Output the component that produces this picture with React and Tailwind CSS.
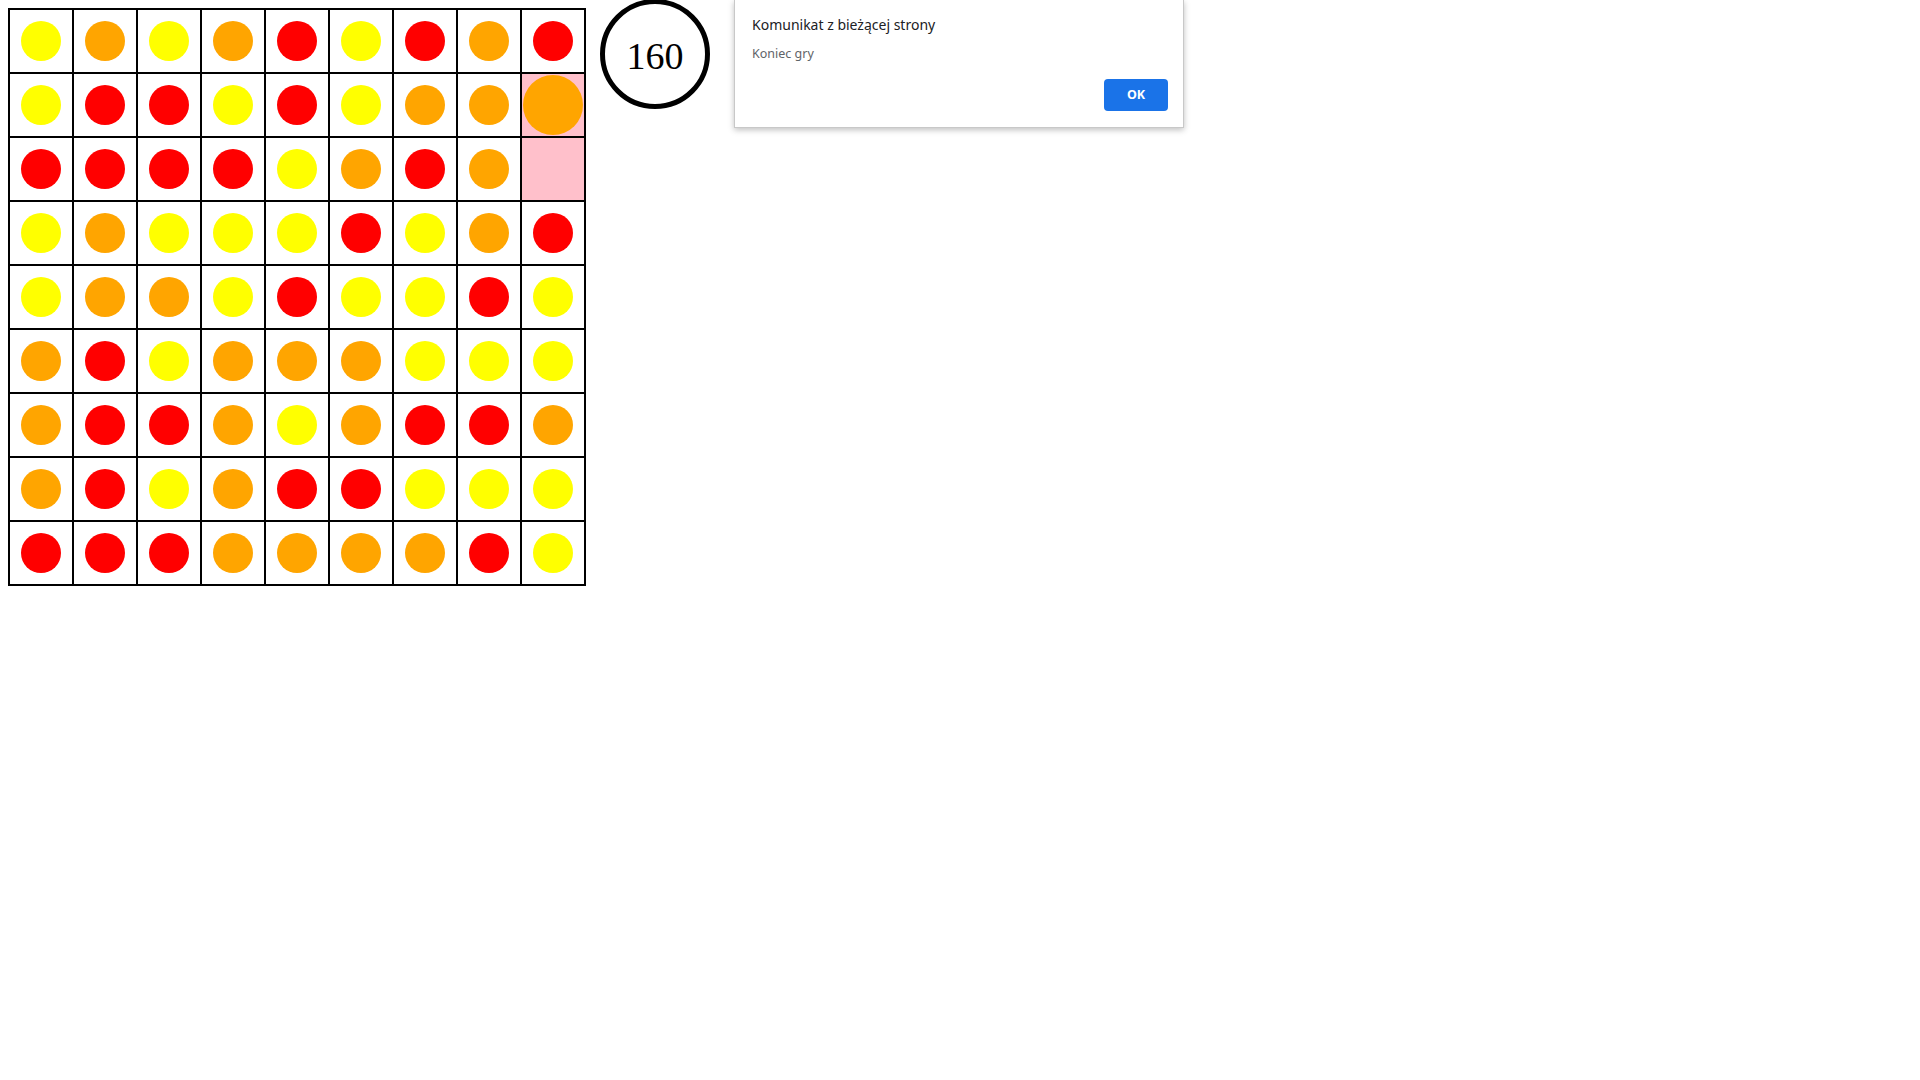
import React from 'react';

const COLORS = { Y: 'bg-[#ffff00]', O: 'bg-[#ffa500]', R: 'bg-[#ff0000]' };

const BOARD = [
  'YOYORYROR',
  'YRRYRYOOo',
  'RRRRYOROx',
  'YOYYYRYOR',
  'YOOYRYYRY',
  'ORYOOOYYY',
  'ORROYORRO',
  'ORYORRYYY',
  'RRROOOORY',
];

const Cell = ({ c }) => {
  if (c === 'o') {
    return (
      <div className="w-[62px] h-[62px] bg-[#ffc0cb] flex items-center justify-center">
        <div className="w-[60px] h-[60px] rounded-full bg-[#ffa500]" />
      </div>
    );
  }
  if (c === 'x') {
    return <div className="w-[62px] h-[62px] bg-[#ffc0cb]" />;
  }
  return (
    <div className="w-[62px] h-[62px] bg-white flex items-center justify-center">
      <div className={`w-[40px] h-[40px] rounded-full ${COLORS[c]}`} />
    </div>
  );
};

const AlertDialog = () => (
  <div
    className="absolute left-[734px] top-0 w-[450px] h-[128px] bg-white border border-t-0 border-[#c8c8c8] shadow-[0_2px_6px_rgba(0,0,0,0.25)] flex flex-col"
    style={{ fontFamily: '"Noto Sans", "Open Sans", sans-serif' }}
  >
    <div className="pl-[17px] pt-[15px] text-[14px] leading-[20px] text-[#202124]">
      Komunikat z bieżącej strony
    </div>
    <div className="pl-[17px] pt-[10px] text-[12.5px] leading-[18px] text-[#5f6368]">
      Koniec gry
    </div>
    <div className="flex justify-end pr-[15px] pt-[16px]">
      <button className="w-[64px] h-[32px] rounded-[4px] bg-[#1a73e8] text-white text-[12.5px] font-bold">
        OK
      </button>
    </div>
  </div>
);

export default function App() {
  return (
    <div className="relative w-[1920px] h-[1080px] bg-white">
      <div className="flex items-start">
        <div className="mt-[8px] ml-[8px] grid grid-cols-9 gap-[2px] p-[2px] bg-black">
          {BOARD.flatMap((row, r) =>
            row.split('').map((c, i) => <Cell key={`${r}-${i}`} c={c} />)
          )}
        </div>
        <div className="ml-[14px] -mt-[1px] w-[110px] h-[110px] rounded-full border-[5px] border-black flex items-center justify-center">
          <span
            className="pt-[3px] text-[38px] leading-none text-black"
            style={{ fontFamily: '"Liberation Serif", serif' }}
          >
            160
          </span>
        </div>
      </div>
      <AlertDialog />
    </div>
  );
}
